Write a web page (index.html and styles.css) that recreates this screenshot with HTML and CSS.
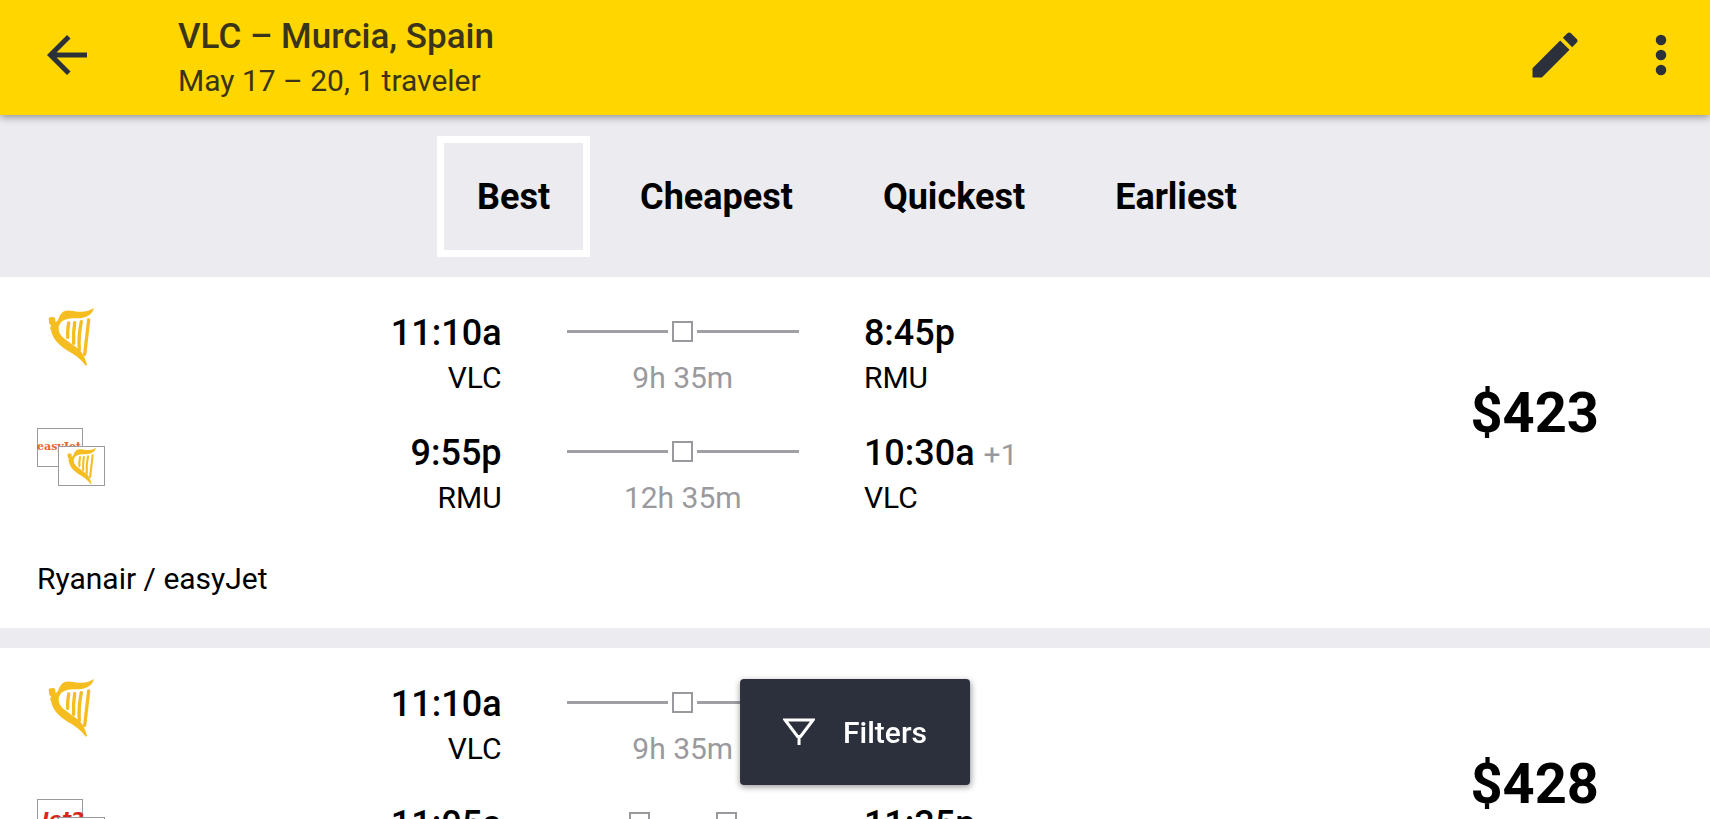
FILE: index.html
```html
<!DOCTYPE html>
<html lang="en">
<head>
    <meta charset="UTF-8">
    <meta name="viewport" content="width=device-width, initial-scale=1.0">
    <title>VLC – Murcia, Spain</title>
    <link rel="stylesheet" href="styles.css">
</head>
<body>

<!-- Shared airline mark -->
<svg class="defs" aria-hidden="true">
    <symbol id="harp" viewBox="84 52 138 174">
        <path d="M86 84Q87 80 92 80L102 79Q107 82 106 89L107 95Q112 94 115 85Q121 68 132 62C144 56 158 61 176 63C194 65 210 60 221 52C220 64 211 73 198 78C181 85 161 81 145 84C130 87 120 94 117 106C114 119 119 131 130 141L152 158C172 172 181 179 188 190C194 200 198 211 201 223L197 225C189 214 180 205 168 196C150 184 132 176 117 161C103 147 95 132 93 118L90 112L94 105L88 99Z"/>
        <path class="string" d="M146 97Q142 118 143 140M164 96Q159 128 161 158M184 93Q175 136 178 176M206 88Q200 140 194 191"/>
    </symbol>
</svg>

<header class="topbar">
    <button type="button" class="icon-btn" aria-label="Back">
        <svg class="icon" viewBox="0 0 24 24"><path d="M20 11H7.830l5.590-5.590L12 4l-8 8 8 8 1.410-1.410L7.830 13H20v-2z"/></svg>
    </button>
    <div class="trip">
        <h1>VLC – Murcia, Spain</h1>
        <p>May 17 – 20, 1 traveler</p>
    </div>
    <button type="button" class="icon-btn" aria-label="Edit search">
        <svg class="icon" viewBox="0 0 24 24"><path d="M3 17.250V21h3.750L17.810 9.940l-3.750-3.750L3 17.250zM20.710 7.040c.39-.39.39-1.020 0-1.410l-2.340-2.340c-.39-.39-1.020-.39-1.410 0l-1.830 1.830 3.750 3.750 1.830-1.830z"/></svg>
    </button>
    <button type="button" class="icon-btn" aria-label="More options">
        <svg class="icon" viewBox="0 0 24 24"><circle cx="12" cy="6" r="2.100"/><circle cx="12" cy="12" r="2.100"/><circle cx="12" cy="18" r="2.100"/></svg>
    </button>
</header>

<nav class="tabs">
    <button type="button" class="tab active">Best</button>
    <button type="button" class="tab">Cheapest</button>
    <button type="button" class="tab">Quickest</button>
    <button type="button" class="tab">Earliest</button>
</nav>

<main class="results">
    <article class="card">
        <div class="card-main">
            <div class="legs">
                <div class="leg">
                    <div class="depart">
                        <svg class="logo" viewBox="0 0 68 58" role="img" aria-label="Ryanair">
                            <use href="#harp" x="11" y="0" width="46" height="58"/>
                        </svg>
                        <div class="stop">
                            <div class="time">11:10a</div>
                            <div class="airport">VLC</div>
                        </div>
                    </div>
                    <div class="duration">
                        <div class="track"><i></i><b></b><i></i></div>
                        <div class="length">9h 35m</div>
                    </div>
                    <div class="arrive">
                        <div class="time">8:45p</div>
                        <div class="airport">RMU</div>
                    </div>
                </div>
                <div class="leg">
                    <div class="depart">
                        <svg class="logo" viewBox="0 0 68 58" role="img" aria-label="easyJet, Ryanair">
                            <rect class="tile" x="0.500" y="0.500" width="45" height="38"/>
                            <text class="easyjet" x="0" y="22">easyJet</text>
                            <rect class="tile" x="21.500" y="18.500" width="46" height="39"/>
                            <use href="#harp" x="30" y="19" width="29" height="38"/>
                        </svg>
                        <div class="stop">
                            <div class="time">9:55p</div>
                            <div class="airport">RMU</div>
                        </div>
                    </div>
                    <div class="duration">
                        <div class="track"><i></i><b></b><i></i></div>
                        <div class="length">12h 35m</div>
                    </div>
                    <div class="arrive">
                        <div class="time">10:30a <span class="next-day">+1</span></div>
                        <div class="airport">VLC</div>
                    </div>
                </div>
            </div>
            <div class="price">$423</div>
        </div>
        <p class="airlines">Ryanair / easyJet</p>
    </article>

    <article class="card">
        <div class="card-main">
            <div class="legs">
                <div class="leg">
                    <div class="depart">
                        <svg class="logo" viewBox="0 0 68 58" role="img" aria-label="Ryanair">
                            <use href="#harp" x="11" y="0" width="46" height="58"/>
                        </svg>
                        <div class="stop">
                            <div class="time">11:10a</div>
                            <div class="airport">VLC</div>
                        </div>
                    </div>
                    <div class="duration">
                        <div class="track"><i></i><b></b><i></i></div>
                        <div class="length">9h 35m</div>
                    </div>
                    <div class="arrive">
                        <div class="time">8:45p</div>
                        <div class="airport">RMU</div>
                    </div>
                </div>
                <div class="leg">
                    <div class="depart">
                        <svg class="logo" viewBox="0 0 68 58" role="img" aria-label="Jet2, Ryanair">
                            <rect class="tile" x="0.500" y="0.500" width="45" height="38"/>
                            <text class="jet2" x="5" y="27">Jet2</text>
                            <rect class="tile" x="21.500" y="18.500" width="46" height="39"/>
                            <use href="#harp" x="30" y="19" width="29" height="38"/>
                        </svg>
                        <div class="stop">
                            <div class="time">11:05a</div>
                            <div class="airport">RMU</div>
                        </div>
                    </div>
                    <div class="duration">
                        <div class="track"><i></i><b></b><i></i><b></b><i></i></div>
                        <div class="length">12h 30m</div>
                    </div>
                    <div class="arrive">
                        <div class="time">11:35p</div>
                        <div class="airport">VLC</div>
                    </div>
                </div>
            </div>
            <div class="price">$428</div>
        </div>
    </article>
</main>

<button type="button" class="filters">
    <svg class="funnel" viewBox="0 0 32 28" aria-hidden="true"><path d="M2 2H30L17.500 18.500H14.500ZM16 18V27"/></svg>
    Filters
</button>

</body>
</html>
```
FILE: styles.css
```css
* {
    box-sizing: border-box;
}
body {
    margin: 0;
    height: 100vh;
    overflow: hidden;
    font-family: Roboto, sans-serif;
    font-size: 30px;
    line-height: 40px;
    color: #000;
    background-color: #ebebf0;
}
h1, p {
    margin: 0;
}
button {
    font-family: inherit;
    border: none;
    cursor: pointer;
}
.defs {
    display: none;
}

/* Top bar */
.topbar {
    position: relative;
    display: flex;
    align-items: flex-start;
    gap: 46px;
    height: 115px;
    padding: 14px 19px 0 37px;
    color: #3a3418;
    background-color: #ffd600;
    box-shadow: 0 2px 8px rgba(0, 0, 0, 0.4);
}
.icon-btn {
    display: flex;
    align-items: center;
    height: 82px;
    padding: 0;
    background: none;
}
.icon {
    width: 60px;
    height: 60px;
    fill: #2c303a;
}
.trip {
    flex: 1;
    padding-left: 35px;
}
.trip h1 {
    font-size: 35px;
    font-weight: 500;
    line-height: 46px;
}
.trip p {
    line-height: 42px;
}

/* Sort tabs */
.tabs {
    display: flex;
    justify-content: center;
    gap: 10px;
    padding: 21px 0 20px 4px;
}
.tab {
    height: 121px;
    padding: 1px 33px 0;
    border: 7px solid transparent;
    font-size: 36px;
    font-weight: 700;
    color: #000;
    background: none;
}
.tab.active {
    border-color: #fff;
}

/* Result cards */
.results {
    display: flex;
    flex-direction: column;
    gap: 20px;
}
.card {
    padding: 31px 111px 29px 37px;
    background-color: #fff;
}
.card-main {
    display: flex;
    align-items: center;
}
.legs {
    flex: 1;
    display: flex;
    flex-direction: column;
    gap: 30px;
}
.leg {
    display: grid;
    grid-template-columns: 36fr 18fr 47fr;
    gap: 65px;
}
.depart {
    display: flex;
    justify-content: space-between;
    text-align: right;
}
.time {
    font-size: 36px;
    font-weight: 500;
    line-height: 50px;
}
.next-day {
    font-size: 30px;
    font-weight: 400;
    line-height: 30px;
    color: #9a9a9e;
}
.duration {
    text-align: center;
    color: #9a9a9e;
}
.track {
    display: flex;
    align-items: center;
    gap: 4px;
    height: 46px;
    margin-bottom: 4px;
}
.track i {
    flex: 1;
    height: 3px;
    background-color: #9f9fa4;
}
.track b {
    width: 21px;
    height: 21px;
    border: 2px solid #9a9a9e;
}
.price {
    font-size: 56px;
    font-weight: 700;
    line-height: 64px;
}
.airlines {
    margin-top: 41px;
}

/* Airline logos */
.logo {
    width: 68px;
    height: 58px;
    fill: #f5bd1f;
}
.string {
    fill: none;
    stroke: #f5bd1f;
    stroke-width: 10px;
    stroke-linecap: round;
}
.tile {
    fill: #fff;
    stroke: #9a9a9e;
}
.easyjet {
    font: 700 11px "DejaVu Serif", serif;
    fill: #e8662a;
}
.jet2 {
    font: italic 700 19px "DejaVu Sans", sans-serif;
    fill: #d8261c;
}

/* Floating button */
.filters {
    position: fixed;
    left: 50%;
    bottom: 34px;
    transform: translateX(-50%);
    display: flex;
    align-items: center;
    gap: 28px;
    height: 106px;
    padding: 0 43px;
    border-radius: 4px;
    font-size: 30px;
    font-weight: 500;
    color: #fff;
    background-color: #2c303c;
    box-shadow: 0 2px 6px rgba(0, 0, 0, 0.4);
}
.funnel {
    width: 32px;
    height: 28px;
    fill: none;
    stroke: #fff;
    stroke-width: 3px;
}
```
